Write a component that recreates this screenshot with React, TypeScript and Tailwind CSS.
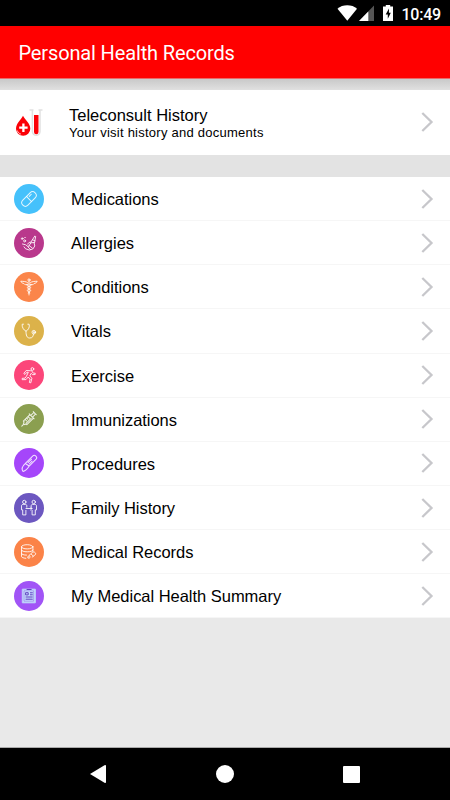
import type { ReactNode } from "react";

type Item = {
    label: string;
    color: string;
    icon: ReactNode;
};

const items: Item[] = [
    {
        label: "Medications",
        color: "bg-[#45c1fb]",
        icon: (
            <g transform="rotate(-45 15 15)">
                <rect x="6.3" y="11.4" width="17.4" height="7.2" rx="3.6" />
                <path d="M15 11.4v7.2M17 13.3h3" />
            </g>
        ),
    },
    {
        label: "Allergies",
        color: "bg-[#b9388c]",
        icon: (
            <>
                <path d="M8.5 16l3.2.8 2.5 2 2.8-4 3-.3.8 3.5-2 3-3.5 1-3.7-1.2-1.6-2M16.5 14.8l4.3-6.8.9.5-1.2 6.2M14 19l2.5 2.5M15 17.5l3.3 2.5M18.5 11.8l2.5 1M13.5 16l2.5-2" />
                <circle cx="8.2" cy="10.6" r=".8" />
                <circle cx="10.6" cy="12.9" r="1" />
                <path d="M10.8 9.5h.5" />
            </>
        ),
    },
    {
        label: "Conditions",
        color: "bg-[#fb854a]",
        icon: (
            <>
                <circle cx="15" cy="8" r="1.1" />
                <path d="M15 9.3v13.7M14 11c-2-2-4.5-1.4-7.2-1.8.8 2 2.2 2 3 2.3.8 1.5 2.8 1.3 4.2 1M16 11c2-2 4.5-1.4 7.2-1.8-.8 2-2.2 2-3 2.3-.8 1.5-2.8 1.3-4.2 1" />
                <path d="M12.7 12.5c-.8 2 4.3 1.6 4 3.4-.3 1.4-3.6 1-3.4 2.8.2 1.2 2.8 1 2.5 2.5M17.3 12.5c.8 2-4.3 1.6-4 3.4.3 1.4 3.6 1 3.4 2.8-.2 1.2-2.8 1-2.5 2.5" />
            </>
        ),
    },
    {
        label: "Vitals",
        color: "bg-[#dcb24a]",
        icon: (
            <>
                <path d="M9.5 8.2H8.2c-.4 2.7 1.2 5.8 3.8 7 2.4-1.2 4-4.3 3.1-7h-1.3M12 15.2c0 4 .7 6.8 3.7 6.8 3.2 0 3.5-2 3.8-4" />
                <circle cx="19.8" cy="16.2" r="1.8" />
                <circle cx="19.8" cy="16.2" r=".5" />
            </>
        ),
    },
    {
        label: "Exercise",
        color: "bg-[#fc467a]",
        icon: (
            <>
                <circle cx="18.4" cy="9" r="1.4" />
                <path d="M16.3 10.7l-4.1-.2-2.4 3 1.2.9 1.9-2.2 1.4.1-1.9 4-1.4 1.9-2.8.1v1.4l3.8-.1 2-2.5 2.2 1.9-.8 3.5 1.4.3 1.1-4.6-2.1-2.3 1.4-2.6 1.3 1.4 2.7-.2v-1.3l-2-.1-1.5-2.2z" />
            </>
        ),
    },
    {
        label: "Immunizations",
        color: "bg-[#8b9f50]",
        icon: (
            <g transform="rotate(-45 15 15)">
                <path d="M4.8 15H8M8 14v2l1.5.6v.9h9.3v-5H9.5v1.2zM18.8 13.8h4.2v2.4h-4.2M23.2 12.8v4.4M18.8 11.5v7M12 12.5v2.3M14 12.5v1.7M16 12.5v2.3M9.8 16h7.2" />
            </g>
        ),
    },
    {
        label: "Procedures",
        color: "bg-[#a546fa]",
        icon: (
            <g transform="rotate(-45 15 15)">
                <path d="M4.8 16.8c.5-3 3.5-4.3 7-4.1h11c2.6 0 2.6 4.6 0 4.6H13c-3 .8-5.7 1-8.2-.5zM12 12.7l1 4.6M14.5 14.1h5M14.5 15.9h4" />
            </g>
        ),
    },
    {
        label: "Family History",
        color: "bg-[#6c57c0]",
        icon: (
            <>
                <circle cx="10.3" cy="9" r="1.7" />
                <circle cx="19.7" cy="9" r="1.7" />
                <path d="M12.8 14.2v-1.3c0-1-.6-1.5-1.5-1.5H9.2c-1 0-1.7.6-1.7 1.7v3.8h1.2v5h3.2v-4.5M17.2 14.2v-1.3c0-1 .6-1.5 1.5-1.5h2.1c1 0 1.7.6 1.7 1.7v3.8h-1.2v5h-3.2v-4.5M12 15.5h6M16.5 14l1.5 1.5-1.5 1.5" />
            </>
        ),
    },
    {
        label: "Medical Records",
        color: "bg-[#fb8348]",
        icon: (
            <>
                <ellipse cx="13.2" cy="9.8" rx="5.7" ry="2.1" />
                <path d="M7.5 9.8v3c0 1.2 2.5 2 5.7 2s5.7-.8 5.7-2v-3M7.5 12.8v3.4c0 1.2 2.2 1.9 5 1.9M7.5 16.2v3.2c0 1 1.8 1.7 4.3 1.9M18.9 12.8v1.7" />
                <path d="M15 18.5l3-2.8c.8-1 2.8-.9 3.4.2.7 1-.1 2.3-1.2 2.6l-2 1.6M14 20.9c-.8-1.2.8-2.7 1.8-1.7 1 .9-.3 2.8-1.8 1.7M17.3 17.2l2 1.8" />
            </>
        ),
    },
    {
        label: "My Medical Health Summary",
        color: "bg-[#a154f6]",
        icon: (
            <>
                <path d="M8.7 8.2h12.6v13.6H8.7z" fill="#c3dafd" stroke="#bed7fa" strokeOpacity="1" />
                <path d="M10.4 9.8h9.2v10.4h-9.2z" stroke="#8d6fe0" strokeWidth=".6" />
                <path d="M13 8.5h4.2M12 11.7h2.2v2.2H12zM16.4 11.8h2M16.4 13.8h2M12 16h6.3M12 18.2h6.3" stroke="#6240c0" strokeOpacity="1" />
            </>
        ),
    },
];

function Chevron() {
    return (
        <svg className="mr-4 shrink-0" width="14" height="22" viewBox="0 0 14 22" fill="none">
            <path d="M2.3 2L11.5 11L2.3 20" stroke="#c7c7cb" strokeWidth="2.3" />
        </svg>
    );
}

function StatusBar() {
    return (
        <div className="flex h-[26px] shrink-0 items-center justify-end bg-black pr-[9px] text-white">
            <svg width="58" height="18" viewBox="338 4 58 18">
                <path d="M338.5 8.7C343.5 4.1 353 4.1 358 8.7L348.3 20.8Z" fill="#fff" />
                <path d="M375 5.5V21H360Z" fill="#555" />
                <path d="M369.3 11.4V21H360Z" fill="#fff" />
                <path d="M384 6.5h2.8V5h4.4v1.5h2.8V21h-10z" fill="#fff" />
                <path d="M390 8.5l-3.3 6h2.1v4.3l3-6h-1.9z" fill="#000" />
            </svg>
            <span className="ml-1.5 pt-[3px] font-[Roboto] text-[16px] leading-none font-medium tracking-[-0.2px]">10:49</span>
        </div>
    );
}

export default function App() {
    return (
        <div className="flex h-[800px] w-[450px] flex-col overflow-hidden bg-[#e9e9e9] font-['Liberation_Sans',Arial,sans-serif] text-black">
            <StatusBar />
            <header className="flex h-[52px] shrink-0 items-center bg-[#ff0000] pt-0.5 pl-[18.5px]">
                <h1 className="font-[Roboto] text-[20px] leading-6 tracking-[-0.14px] whitespace-nowrap text-white">Personal Health Records</h1>
            </header>
            <div className="h-3 shrink-0 border-t border-[#e86a6a] bg-linear-to-b from-[#c9c9c9] to-[#e0e0e0]" />

            <div className="flex h-[65px] shrink-0 items-center bg-white pb-px">
                <svg className="ml-4 shrink-0" width="28" height="30" viewBox="16 107 28 30" fill="none">
                    <path d="M23 115.8C21 119.7 16 123.5 16 128.7a7 7 0 0 0 14.3 0C30.3 123.5 25 119.7 23 115.8Z" fill="#fb0007" />
                    <path d="M23.4 123.5v8.5M19.2 127.7h8.4" stroke="#fff" strokeWidth="2.3" />
                    <path d="M17.3 130.5c.5 1.8 1.8 3 3.6 3.6" stroke="#fff" strokeWidth=".8" />
                    <path d="M29.5 110h4M38.5 110h4M32.4 110v21.5a3.8 3.8 0 0 0 7.6 0V110" stroke="#e1e1e1" strokeWidth="1.5" />
                    <path d="M34 115h4.5v17a2 2 0 0 1-4.5 0z" fill="#fb0007" />
                </svg>
                <div className="ml-[25px] flex-1 pt-[3px] whitespace-nowrap">
                    <div className="text-[16.5px] leading-[19px]">Teleconsult History</div>
                    <div className="text-[13px] leading-4 tracking-[0.25px]">Your visit history and documents</div>
                </div>
                <Chevron />
            </div>

            <div className="h-[22px] shrink-0 bg-[#e3e3e3]" />

            <ul className="shrink-0">
                {items.map((item) => (
                    <li key={item.label} className="flex h-[44.15px] items-center border-b border-[#f6f6f6] bg-white">
                        <div className={`ml-3.5 size-[30px] shrink-0 rounded-full ${item.color}`}>
                            <svg
                                width="30"
                                height="30"
                                viewBox="0 0 30 30"
                                fill="none"
                                stroke="#fff"
                                strokeOpacity=".85"
                                strokeLinecap="round"
                                strokeLinejoin="round"
                            >
                                {item.icon}
                            </svg>
                        </div>
                        <span className="ml-[27px] flex-1 pt-px text-[16.5px] leading-5 tracking-[-0.03px] whitespace-nowrap">{item.label}</span>
                        <Chevron />
                    </li>
                ))}
            </ul>

            <nav className="mt-auto flex h-[53px] shrink-0 items-center justify-between border-t border-[#aaa] bg-black px-[90px]">
                <svg width="16" height="20" viewBox="0 0 16 20">
                    <path d="M0 10L14.5 1.2Q16 .5 16 2V18Q16 19.5 14.5 18.8Z" fill="#fff" />
                </svg>
                <div className="size-[18px] rounded-full bg-white" />
                <div className="size-[17px] rounded-[1px] bg-white" />
            </nav>
        </div>
    );
}
